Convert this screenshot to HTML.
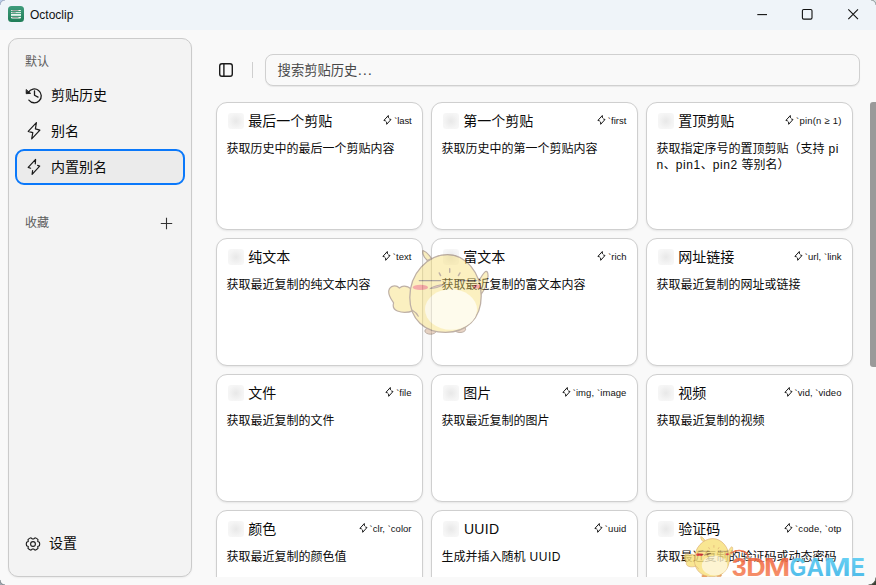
<!DOCTYPE html>
<html lang="zh-CN">
<head>
<meta charset="utf-8">
<title>Octoclip</title>
<style>
*{box-sizing:border-box;margin:0;padding:0}
html,body{width:876px;height:585px;overflow:hidden}
body{position:relative;background:#f9f9f9;font-family:"Liberation Sans","Noto Sans CJK SC",sans-serif;color:#111}
.abs{position:absolute}
.t{position:absolute;white-space:nowrap;color:#0a0a0a;font-family:"Liberation Sans","Noto Sans CJK SC",sans-serif}
#titlebar{position:absolute;left:0;top:0;width:876px;height:30px;background:#eff4f9}
#titlebar .name{position:absolute;left:30px;top:8px;font-size:12px;line-height:14px;color:#111}
#side{position:absolute;left:8px;top:38px;width:184px;height:539px;background:#f3f3f3;border:1px solid #cbcbcb;border-radius:10px;box-shadow:0 1px 2px rgba(0,0,0,.06)}
.grp{color:#5c5c5c}
.dsc .l{letter-spacing:.55px}
.ttl .l{letter-spacing:.35px;margin-left:.7px}
.sel{position:absolute;left:15px;top:149px;width:170px;height:36px;border:2px solid #0a78fa;border-radius:9px;background:#ebebeb}
#search{position:absolute;left:265px;top:54px;width:595px;height:32px;border:1px solid #d0d0d0;border-radius:8px;background:#f9f9f9;box-shadow:0 1px 1px rgba(0,0,0,.07)}
.plh{color:#484848}
.plh b{font-weight:normal;font-size:15px;letter-spacing:.8px;margin-left:.4px}
#sep{position:absolute;left:252px;top:62px;width:1px;height:16px;background:#cfcfcf}
#clip{position:absolute;left:200px;top:94px;width:676px;height:483px;overflow:hidden}
#clip .inner{position:absolute;left:-200px;top:-94px;width:876px;height:700px}
.card{position:absolute;width:207px;height:128px;background:#fff;border:1px solid #cfcfcf;border-radius:11px;box-shadow:0 1px 2px rgba(0,0,0,.08)}
.card .ph{position:absolute;left:11px;top:10px;width:16px;height:16px;border-radius:3px;background:radial-gradient(circle at 50% 50%,#e8e8e8 0,#eeeeee 30%,#f5f5f5 65%,#f8f8f8 100%)}
.card .al{position:absolute;right:10.5px;top:10.8px;height:14px;font-size:9.5px;line-height:14px;white-space:nowrap;color:#111;display:flex;align-items:flex-start}
.card .al svg{display:block;margin:0.2px 1px 0 0}
#thumb{position:absolute;left:870px;top:102px;width:6px;height:265px;border-radius:3px 0 0 3px;background:#9a9a9a}
</style>
</head>
<body>

<div id="titlebar">
  <svg class="abs" style="left:8px;top:6px" width="16" height="16" viewBox="0 0 16 16">
    <defs><linearGradient id="gg" x1="0" y1="0" x2="0" y2="1"><stop offset="0" stop-color="#3f9c7c"/><stop offset="1" stop-color="#1f7d58"/></linearGradient></defs>
    <rect x="0" y="0" width="16" height="16" rx="3.5" fill="url(#gg)"/>
    <rect x="3" y="3.9" width="10" height="8.5" rx=".8" fill="#f1faf5"/>
    <rect x="3" y="5.1" width="10" height="1.05" fill="#2f8f6b"/>
    <rect x="3" y="7.2" width="10" height=".85" fill="#2f8f6b"/>
    <rect x="3" y="9.8" width="10" height="1.1" fill="#2f8f6b"/>
    <rect x="4.2" y="4.3" width="6.3" height=".7" fill="#555" opacity=".75"/>
    <rect x="4.2" y="6.35" width="3.6" height=".7" fill="#666" opacity=".7"/>
    <rect x="4.2" y="11.1" width="6.3" height=".7" fill="#555" opacity=".75"/>
  </svg>
  <div class="name">Octoclip</div>
  <svg class="abs" style="left:752px;top:4px" width="120" height="22" viewBox="0 0 120 22" fill="none" stroke="#111" stroke-width="1.1">
    <path d="M5.3 10.6 H15"/>
    <rect x="50.4" y="5.5" width="9.6" height="9.6" rx="1.3"/>
    <path d="M96.3 5.4 L106 15.1 M106 5.4 L96.3 15.1"/>
  </svg>
</div>

<div id="side"></div>
<!-- sidebar icons -->
<svg class="abs" style="left:24px;top:85px" width="20" height="20" viewBox="0 0 20 20" fill="none" stroke="#1b1b1b" stroke-width="1.3" stroke-linecap="round" stroke-linejoin="round">
  <path d="M4.9 15.1 A6.9 6.9 0 1 0 4.4 7.4"/>
  <path d="M2.2 4.9 L2.2 8.7 L6.3 8.4 Z" fill="#1b1b1b" stroke-width="0.9"/>
  <path d="M10.5 6.0 V10.2 L14 12.1"/>
</svg>
<svg class="abs" style="left:24px;top:120px" width="20" height="22" viewBox="0 0 20 22" fill="none" stroke="#1b1b1b" stroke-width="1.2" stroke-linejoin="round">
  <path d="M12.4 2.7 L4.2 11.4 L8.8 12.7 L7.7 18.8 L15.9 10.1 L11.4 8.8 Z"/>
</svg>
<svg class="abs" style="left:24px;top:156px;z-index:3" width="20" height="22" viewBox="0 0 20 22" fill="none" stroke="#1b1b1b" stroke-width="1.2" stroke-linejoin="round" stroke-linecap="round">
  <path d="M6.6 12.2 L4.2 11.4 L11.6 3.4 L11.3 7.8"/>
  <path d="M13.6 9.4 L15.7 10.1 L8.1 18.3 L8.6 14.6"/>
</svg>
<svg class="abs" style="left:160px;top:217px" width="13" height="13" viewBox="0 0 13 13" fill="none" stroke="#333" stroke-width="1.1">
  <path d="M6.5 0.8 V12.2 M0.8 6.5 H12.2"/>
</svg>
<svg class="abs" style="left:24px;top:535px" width="18" height="18" viewBox="0 0 18 18" fill="none" stroke="#1b1b1b" stroke-width="1.1" stroke-linejoin="round">
  <circle cx="9" cy="9" r="2.4"/>
  <path transform="rotate(90 9 9)" d="M7.2 2.6 Q9 1.9 10.8 2.6 L11.5 4.3 L13.4 4.0 Q14.8 5.3 15.2 7.0 L14.0 8.4 L14.0 9.6 L15.2 11.0 Q14.8 12.7 13.4 14.0 L11.5 13.7 L10.8 15.4 Q9 16.1 7.2 15.4 L6.5 13.7 L4.6 14.0 Q3.2 12.7 2.8 11.0 L4.0 9.6 L4.0 8.4 L2.8 7.0 Q3.2 5.3 4.6 4.0 L6.5 4.3 Z"/>
</svg>
<div class="t grp" style="left:25px;top:56.1px;font-size:12px;line-height:12px;">默认</div>
<div class="t " style="left:51px;top:88px;font-size:14px;line-height:14px;">剪贴历史</div>
<div class="t " style="left:51px;top:124px;font-size:14px;line-height:14px;">别名</div>
<div class="sel"></div>
<div class="t " style="left:51px;top:160px;font-size:14px;line-height:14px;">内置别名</div>
<div class="t grp" style="left:25px;top:217px;font-size:12px;line-height:12px;">收藏</div>
<div class="t " style="left:49px;top:536px;font-size:14px;line-height:14px;">设置</div>

<!-- toolbar -->
<svg class="abs" style="left:218px;top:62px" width="16" height="16" viewBox="0 0 16 16" fill="none" stroke="#1b1b1b" stroke-width="1.4">
  <rect x="1.7" y="1.7" width="12.6" height="12.6" rx="2.2"/>
  <path d="M5.9 1.7 V14.3"/>
</svg>
<div id="sep"></div>
<div id="search"></div>
<div class="t plh" style="left:277.6px;top:63.4px;font-size:13.3px;line-height:13.3px;">搜索剪贴历史<b>...</b></div>

<div id="clip"><div class="inner">
<div class="card" style="left:216px;top:102px"><span class="ph"></span><div class="t ttl" style="left:31.2px;top:11px;font-size:14px;line-height:14px;">最后一个剪贴</div><div class="al"><svg class="fi" width="10" height="12" viewBox="0 0 10 12" fill="none" stroke="#1b1b1b" stroke-width="1" stroke-linejoin="round" stroke-linecap="round"><path d="M5.4 3.7 L5.3 1.5 L0.9 6.4 L2.5 6.9"/><path d="M3.6 8.1 L3.7 10.3 L8.0 5.5 L6.5 5.0"/></svg><span style="letter-spacing:-0.145px">`last</span></div><div class="t dsc" style="left:9.6px;top:39.8px;font-size:12px;line-height:12px;">获取历史中的最后一个剪贴内容</div></div>
<div class="card" style="left:431px;top:102px"><span class="ph"></span><div class="t ttl" style="left:31.2px;top:11px;font-size:14px;line-height:14px;">第一个剪贴</div><div class="al"><svg class="fi" width="10" height="12" viewBox="0 0 10 12" fill="none" stroke="#1b1b1b" stroke-width="1" stroke-linejoin="round" stroke-linecap="round"><path d="M5.4 3.7 L5.3 1.5 L0.9 6.4 L2.5 6.9"/><path d="M3.6 8.1 L3.7 10.3 L8.0 5.5 L6.5 5.0"/></svg><span style="letter-spacing:0.045px">`first</span></div><div class="t dsc" style="left:9.6px;top:39.8px;font-size:12px;line-height:12px;">获取历史中的第一个剪贴内容</div></div>
<div class="card" style="left:646px;top:102px"><span class="ph"></span><div class="t ttl" style="left:31.2px;top:11px;font-size:14px;line-height:14px;">置顶剪贴</div><div class="al"><svg class="fi" width="10" height="12" viewBox="0 0 10 12" fill="none" stroke="#1b1b1b" stroke-width="1" stroke-linejoin="round" stroke-linecap="round"><path d="M5.4 3.7 L5.3 1.5 L0.9 6.4 L2.5 6.9"/><path d="M3.6 8.1 L3.7 10.3 L8.0 5.5 L6.5 5.0"/></svg><span style="letter-spacing:0.202px">`pin(n ≥ 1)</span></div><div class="t dsc" style="left:9.6px;top:39.8px;font-size:12px;line-height:12px;">获取指定序号的置顶剪贴（支持<span class="l"> pi</span></div><div class="t dsc" style="left:9.6px;top:55.8px;font-size:12px;line-height:12px;"><span class="l">n</span>、<span class="l">pin1</span>、<span class="l">pin2 </span>等别名）</div></div>
<div class="card" style="left:216px;top:238px"><span class="ph"></span><div class="t ttl" style="left:31.2px;top:11px;font-size:14px;line-height:14px;">纯文本</div><div class="al"><svg class="fi" width="10" height="12" viewBox="0 0 10 12" fill="none" stroke="#1b1b1b" stroke-width="1" stroke-linejoin="round" stroke-linecap="round"><path d="M5.4 3.7 L5.3 1.5 L0.9 6.4 L2.5 6.9"/><path d="M3.6 8.1 L3.7 10.3 L8.0 5.5 L6.5 5.0"/></svg><span style="letter-spacing:0.041px">`text</span></div><div class="t dsc" style="left:9.6px;top:39.8px;font-size:12px;line-height:12px;">获取最近复制的纯文本内容</div></div>
<div class="card" style="left:431px;top:238px"><span class="ph"></span><div class="t ttl" style="left:31.2px;top:11px;font-size:14px;line-height:14px;">富文本</div><div class="al"><svg class="fi" width="10" height="12" viewBox="0 0 10 12" fill="none" stroke="#1b1b1b" stroke-width="1" stroke-linejoin="round" stroke-linecap="round"><path d="M5.4 3.7 L5.3 1.5 L0.9 6.4 L2.5 6.9"/><path d="M3.6 8.1 L3.7 10.3 L8.0 5.5 L6.5 5.0"/></svg><span style="letter-spacing:-0.042px">`rich</span></div><div class="t dsc" style="left:9.6px;top:39.8px;font-size:12px;line-height:12px;">获取最近复制的富文本内容</div></div>
<div class="card" style="left:646px;top:238px"><span class="ph"></span><div class="t ttl" style="left:31.2px;top:11px;font-size:14px;line-height:14px;">网址链接</div><div class="al"><svg class="fi" width="10" height="12" viewBox="0 0 10 12" fill="none" stroke="#1b1b1b" stroke-width="1" stroke-linejoin="round" stroke-linecap="round"><path d="M5.4 3.7 L5.3 1.5 L0.9 6.4 L2.5 6.9"/><path d="M3.6 8.1 L3.7 10.3 L8.0 5.5 L6.5 5.0"/></svg><span style="letter-spacing:0.026px">`url, `link</span></div><div class="t dsc" style="left:9.6px;top:39.8px;font-size:12px;line-height:12px;">获取最近复制的网址或链接</div></div>
<div class="card" style="left:216px;top:374px"><span class="ph"></span><div class="t ttl" style="left:31.2px;top:11px;font-size:14px;line-height:14px;">文件</div><div class="al"><svg class="fi" width="10" height="12" viewBox="0 0 10 12" fill="none" stroke="#1b1b1b" stroke-width="1" stroke-linejoin="round" stroke-linecap="round"><path d="M5.4 3.7 L5.3 1.5 L0.9 6.4 L2.5 6.9"/><path d="M3.6 8.1 L3.7 10.3 L8.0 5.5 L6.5 5.0"/></svg><span style="letter-spacing:-0.005px">`file</span></div><div class="t dsc" style="left:9.6px;top:39.8px;font-size:12px;line-height:12px;">获取最近复制的文件</div></div>
<div class="card" style="left:431px;top:374px"><span class="ph"></span><div class="t ttl" style="left:31.2px;top:11px;font-size:14px;line-height:14px;">图片</div><div class="al"><svg class="fi" width="10" height="12" viewBox="0 0 10 12" fill="none" stroke="#1b1b1b" stroke-width="1" stroke-linejoin="round" stroke-linecap="round"><path d="M5.4 3.7 L5.3 1.5 L0.9 6.4 L2.5 6.9"/><path d="M3.6 8.1 L3.7 10.3 L8.0 5.5 L6.5 5.0"/></svg><span style="letter-spacing:0.086px">`img, `image</span></div><div class="t dsc" style="left:9.6px;top:39.8px;font-size:12px;line-height:12px;">获取最近复制的图片</div></div>
<div class="card" style="left:646px;top:374px"><span class="ph"></span><div class="t ttl" style="left:31.2px;top:11px;font-size:14px;line-height:14px;">视频</div><div class="al"><svg class="fi" width="10" height="12" viewBox="0 0 10 12" fill="none" stroke="#1b1b1b" stroke-width="1" stroke-linejoin="round" stroke-linecap="round"><path d="M5.4 3.7 L5.3 1.5 L0.9 6.4 L2.5 6.9"/><path d="M3.6 8.1 L3.7 10.3 L8.0 5.5 L6.5 5.0"/></svg><span style="letter-spacing:0.040px">`vid, `video</span></div><div class="t dsc" style="left:9.6px;top:39.8px;font-size:12px;line-height:12px;">获取最近复制的视频</div></div>
<div class="card" style="left:216px;top:510px"><span class="ph"></span><div class="t ttl" style="left:31.2px;top:11px;font-size:14px;line-height:14px;">颜色</div><div class="al"><svg class="fi" width="10" height="12" viewBox="0 0 10 12" fill="none" stroke="#1b1b1b" stroke-width="1" stroke-linejoin="round" stroke-linecap="round"><path d="M5.4 3.7 L5.3 1.5 L0.9 6.4 L2.5 6.9"/><path d="M3.6 8.1 L3.7 10.3 L8.0 5.5 L6.5 5.0"/></svg><span style="letter-spacing:0.018px">`clr, `color</span></div><div class="t dsc" style="left:9.6px;top:39.8px;font-size:12px;line-height:12px;">获取最近复制的颜色值</div></div>
<div class="card" style="left:431px;top:510px"><span class="ph"></span><div class="t ttl" style="left:31.2px;top:11px;font-size:14px;line-height:14px;"><span class="l">UUID</span></div><div class="al"><svg class="fi" width="10" height="12" viewBox="0 0 10 12" fill="none" stroke="#1b1b1b" stroke-width="1" stroke-linejoin="round" stroke-linecap="round"><path d="M5.4 3.7 L5.3 1.5 L0.9 6.4 L2.5 6.9"/><path d="M3.6 8.1 L3.7 10.3 L8.0 5.5 L6.5 5.0"/></svg><span style="letter-spacing:0.116px">`uuid</span></div><div class="t dsc" style="left:9.6px;top:39.8px;font-size:12px;line-height:12px;">生成并插入随机<span class="l"> UUID</span></div></div>
<div class="card" style="left:646px;top:510px"><span class="ph"></span><div class="t ttl" style="left:31.2px;top:11px;font-size:14px;line-height:14px;">验证码</div><div class="al"><svg class="fi" width="10" height="12" viewBox="0 0 10 12" fill="none" stroke="#1b1b1b" stroke-width="1" stroke-linejoin="round" stroke-linecap="round"><path d="M5.4 3.7 L5.3 1.5 L0.9 6.4 L2.5 6.9"/><path d="M3.6 8.1 L3.7 10.3 L8.0 5.5 L6.5 5.0"/></svg><span style="letter-spacing:0.089px">`code, `otp</span></div><div class="t dsc" style="left:9.6px;top:39.8px;font-size:12px;line-height:12px;">获取最近复制的验证码或动态密码</div></div>
</div></div>
<div id="thumb"></div>
<!-- watermark mascot + logo + window corners -->
<svg class="abs" style="left:0;top:0;pointer-events:none" width="876" height="585" viewBox="0 0 876 585">
  <defs>
    <g id="masc">
      <!-- feet -->
      <ellipse cx="430.5" cy="331" rx="5.6" ry="3.2" style="fill:var(--ft);stroke:var(--ol)" stroke-width="1"/>
      <ellipse cx="460" cy="329.3" rx="5.6" ry="3.2" style="fill:var(--ft);stroke:var(--ol)" stroke-width="1"/>
      <!-- right wing -->
      <path d="M477.5 283 C480.5 278 483 273.5 485.3 271.6 C487.8 270.6 488.6 274 487.6 279 C486.6 285 484.5 290 481.2 294 Z" style="fill:var(--bd);stroke:var(--ol)" stroke-width="1.2" stroke-linejoin="round"/>
      <!-- left wing -->
      <path d="M412 289.5 C408 286.5 403 285 399.4 288 C396 284.6 390 285.4 388.8 290.6 C388 295.6 391.4 299.6 393.6 302.8 C392.6 306.4 394 309.6 397.4 311 C402 312.8 408 312.8 413.4 310.6 Z" style="fill:var(--bd);stroke:var(--ol)" stroke-width="1.2" stroke-linejoin="round"/>
      <!-- tuft -->
      <path d="M431.5 258.5 C429 254.5 426 251.6 423 250.5 C422.3 253.5 424 257.5 427.3 260.5 Z" style="fill:var(--bd);stroke:var(--ol)" stroke-width="1.2" stroke-linejoin="round"/>
      <!-- body -->
      <path d="M447.5 254.6 C465 254.6 481.2 272 481.2 296 C481.2 319 466 332.4 445.5 332.4 C425 332.4 409.8 319.5 409.8 297.5 C409.8 273 428 254.6 447.5 254.6 Z" style="fill:var(--bd);stroke:var(--ol)" stroke-width="1.3"/>
      <!-- belly -->
      <ellipse cx="451" cy="309.5" rx="26" ry="20.3" style="fill:var(--bl)"/>
      <!-- wing fold -->
      <path d="M412.3 310.3 C415 311.8 417.2 313.8 418.3 316.3" fill="none" style="stroke:var(--ol)" stroke-width="1.1" stroke-linecap="round"/>
      <!-- cheeks -->
      <ellipse cx="420.4" cy="287.4" rx="7.6" ry="2.7" style="fill:var(--ck)"/>
      <ellipse cx="477" cy="286.6" rx="3.8" ry="2.1" style="fill:var(--ck)"/>
      <!-- eyes -->
      <path d="M419.2 280.6 H440.6 M458.5 280.6 H477" fill="none" style="stroke:var(--ey)" stroke-width="1.1" stroke-linecap="round"/>
      <!-- beak -->
      <path d="M429.8 288.6 C434 286 439 284.8 443.6 284.6 C440 287 434.5 288.6 429.8 288.6 Z" style="fill:var(--bk);stroke:var(--ey)" stroke-width=".7"/>
      <!-- forehead marks -->
      <path d="M439.2 272.9 L440.6 275.6 M449.7 268.7 V272.3 M460 272.9 L458.4 275.6" fill="none" style="stroke:var(--ol)" stroke-width="1.4" stroke-linecap="round"/>
    </g>
    <linearGradient id="g3" x1="0" y1="0" x2="0" y2="1"><stop offset="0" stop-color="#f0623c"/><stop offset="1" stop-color="#f68a60"/></linearGradient>
    <linearGradient id="gb" x1="0" y1="0" x2="0" y2="1"><stop offset="0" stop-color="#5fd0f5"/><stop offset="1" stop-color="#38b2e6"/></linearGradient>
    <clipPath id="cb"><rect x="0" y="0" width="876" height="577"/></clipPath>
  </defs>
  <g opacity=".43" style="--bd:#f8de70;--ol:#6a4a32;--bl:#fef6d4;--ck:#e8403a;--ey:#40302a;--bk:#c07a60;--ft:#cfa07c"><use href="#masc"/></g>
  <g clip-path="url(#cb)">
    <g opacity=".8" transform="translate(711.8 557.6) scale(.49) translate(-445.4 -293.4)" style="--bd:#f8e078;--ol:#d39a50;--bl:#fdf2c8;--ck:#e8403a;--ey:#6b4a36;--bk:#9a5a3a;--ft:#e8883c"><use href="#masc"/></g>
    <path d="M731 553 C736 549.5 743 549.8 746.8 553.4 C748 554.6 748.3 556 747.6 557.2" fill="none" stroke="#f2693f" stroke-width="1.5" stroke-linecap="round" opacity=".9"/>
    <g font-family="'Liberation Sans',sans-serif" font-weight="bold" font-size="25" stroke="#fff" stroke-width=".8" paint-order="stroke" stroke-opacity=".5" opacity=".9">
      <g fill="url(#g3)">
        <text x="732" y="575.6" textLength="14.6" lengthAdjust="spacingAndGlyphs">3</text>
        <text x="746.2" y="575.6" textLength="19.4" lengthAdjust="spacingAndGlyphs">D</text>
        <text x="763.8" y="575.6" textLength="26.6" lengthAdjust="spacingAndGlyphs">M</text>
      </g>
      <g fill="url(#gb)">
        <text x="789.4" y="575.6" textLength="16.8" lengthAdjust="spacingAndGlyphs">G</text>
        <text x="806.4" y="575.6" textLength="17.4" lengthAdjust="spacingAndGlyphs">A</text>
        <text x="823.7" y="575.6" textLength="27" lengthAdjust="spacingAndGlyphs">M</text>
        <text x="850.8" y="575.6" textLength="14" lengthAdjust="spacingAndGlyphs">E</text>
      </g>
    </g>
  </g>
  <!-- window corners -->
  <path d="M0 0 H5.5 A5.5 5.5 0 0 0 0 5.5 Z" fill="#bccdea"/><path d="M0 5 A5 5 0 0 1 5 0" fill="none" stroke="#9aa6bd" stroke-width="1"/>
  <path d="M876 0 H870.5 A5.5 5.5 0 0 1 876 5.5 Z" fill="#dbe3e3"/><path d="M871 0 A5 5 0 0 1 876 5" fill="none" stroke="#8e9797" stroke-width="1"/>
  <path d="M0 585 H5.5 A5.5 5.5 0 0 1 0 579.5 Z" fill="#9fa8b1"/><path d="M0 580 A5 5 0 0 0 5 585" fill="none" stroke="#7f878b" stroke-width="1"/>
  <path d="M876 585 H868 A8 8 0 0 0 876 577 Z" fill="#3b4034"/><path d="M868.5 585 A7.5 7.5 0 0 0 876 577.5" fill="none" stroke="#6b7068" stroke-width="1"/>
</svg>

</body>
</html>
